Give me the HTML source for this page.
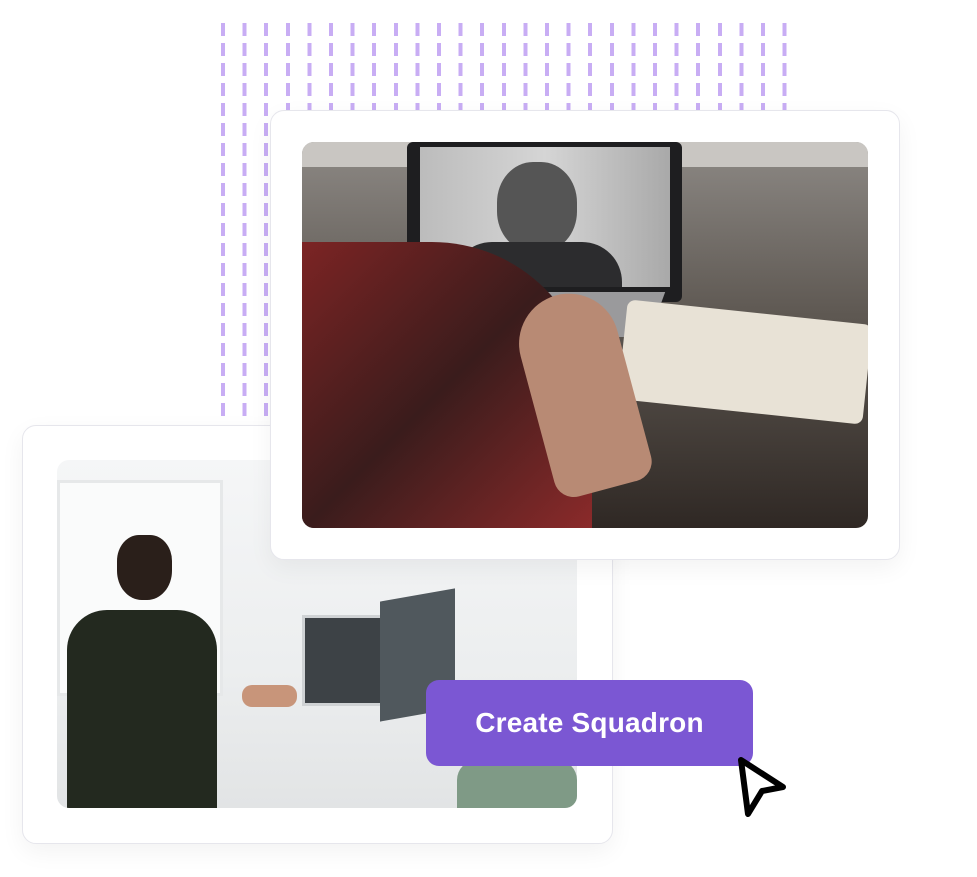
<!DOCTYPE html>
<html><head><style>
html,body{margin:0;padding:0;background:#fff;width:977px;height:877px;overflow:hidden;position:relative;font-family:"Liberation Sans",sans-serif}
.dash{position:absolute;left:221px;top:23px;width:570px;height:400px;
background-image:repeating-linear-gradient(to bottom,#c8adf4 0 13px,transparent 13px 20px);
-webkit-mask-image:repeating-linear-gradient(to right,#000 0 4px,transparent 4px 21.6px);
mask-image:repeating-linear-gradient(to right,#000 0 4px,transparent 4px 21.6px)}
.card{position:absolute;background:#fff;border:1.5px solid #e6e6ec;border-radius:14px;box-shadow:0 8px 24px rgba(0,0,0,.05)}
.img{position:absolute;border-radius:12px;overflow:hidden}
.btn{position:absolute;left:426px;top:680px;width:327px;height:86px;background:#7b57d3;border-radius:13px;color:#fff;font-size:28px;font-weight:bold;display:flex;align-items:center;justify-content:center;letter-spacing:.2px}
</style></head><body>
<div class="dash"></div>

<div class="card" style="left:22px;top:425px;width:589px;height:417px"></div>
<div class="img" style="left:57px;top:460px;width:520px;height:348px;background:linear-gradient(180deg,#f5f6f7,#eceeef 60%,#e2e4e5)">
  <div style="position:absolute;left:0;top:20px;width:160px;height:210px;background:#fafbfb;border:3px solid #e6e8e9"></div>
  <div style="position:absolute;left:245px;top:155px;width:90px;height:85px;background:#3d4246;border:3px solid #cfd2d4"></div>
  <div style="position:absolute;left:323px;top:135px;width:75px;height:120px;background:#50585d;transform:skewY(-10deg)"></div>
  <div style="position:absolute;left:60px;top:75px;width:55px;height:65px;background:#2a1f1a;border-radius:40% 40% 45% 45%"></div>
  <div style="position:absolute;left:10px;top:150px;width:150px;height:200px;background:#23291f;border-radius:40px 40px 0 0"></div>
  <div style="position:absolute;left:185px;top:225px;width:55px;height:22px;background:#c8957a;border-radius:10px"></div>
  <div style="position:absolute;left:400px;top:300px;width:120px;height:48px;background:#7f9a86;border-radius:20px 20px 0 0"></div>
</div>

<div class="card" style="left:270px;top:110px;width:628px;height:448px"></div>
<div class="img" style="left:302px;top:142px;width:566px;height:386px;background:linear-gradient(180deg,#8d8985,#5e5852 45%,#2f2824)">
  <div style="position:absolute;left:0;top:0;width:566px;height:25px;background:#c9c6c2"></div>
  <div style="position:absolute;left:105px;top:0;width:275px;height:160px;background:#1e1e20;border-radius:6px"></div>
  <div style="position:absolute;left:118px;top:5px;width:250px;height:140px;background:linear-gradient(90deg,#bcbcbc,#d5d5d5,#a9a9a9)"></div>
  <div style="position:absolute;left:195px;top:20px;width:80px;height:90px;background:#555;border-radius:45%"></div>
  <div style="position:absolute;left:150px;top:100px;width:170px;height:45px;background:#2c2c2e;border-radius:40px 40px 0 0"></div>
  <div style="position:absolute;left:85px;top:150px;width:270px;height:45px;background:#9a9a9c;transform:skewX(-20deg)"></div>
  <div style="position:absolute;left:320px;top:170px;width:246px;height:100px;background:#e8e2d6;transform:rotate(6deg);border-radius:8px"></div>
  <div style="position:absolute;left:0;top:100px;width:290px;height:286px;background:linear-gradient(135deg,#7c2424,#3a1c1c 50%,#8b2a2a);border-radius:0 160px 0 0"></div>
  <div style="position:absolute;left:230px;top:150px;width:100px;height:200px;background:#b88a74;border-radius:50px 50px 20px 20px;transform:rotate(-15deg)"></div>
</div>

<div class="btn">Create Squadron</div>
<svg style="position:absolute;left:733px;top:753px" width="58" height="68" viewBox="0 0 58 68">
<path d="M8 7 L50 34 L29 38 L15 61 Z" fill="#fff" stroke="#000" stroke-width="6" stroke-linejoin="round"/>
</svg>
</body></html>
